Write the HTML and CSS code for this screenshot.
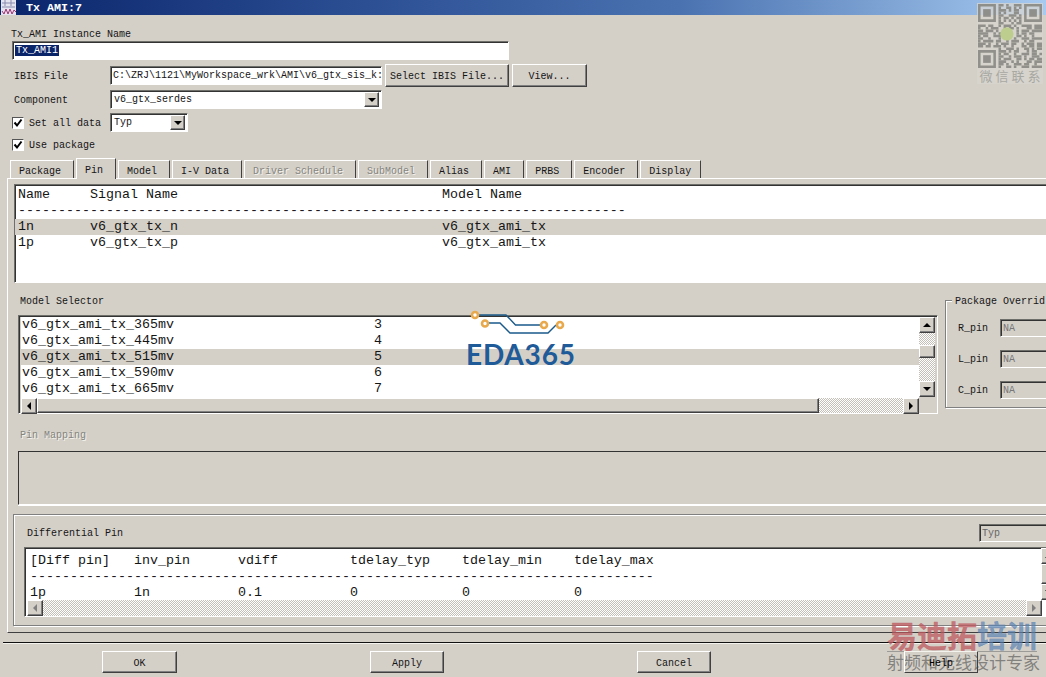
FILE: index.html
```html
<!DOCTYPE html>
<html lang="en">
<head>
<meta charset="utf-8">
<title>Tx AMI:7</title>
<link rel="stylesheet" href="styles.css">
</head>
<body>
<div class="window">
  <header class="titlebar">
    <svg class="appicon" width="17" height="15" viewBox="0 0 17 15"><rect x="1" y="0" width="15" height="15" fill="#e4e4f0"/><path d="M2 3h13M2 7h13M5 0v6M11 0v6" stroke="#8a8ab0" fill="none"/><path d="M2 11l2 3 2-5 2 5 2-5 2 5 2-4 2 2" stroke="#a03070" fill="none"/></svg>
    <span class="titletext">Tx AMI:7</span>
  </header>

  <section class="top">
    <div class="lbl">Tx_AMI Instance Name</div>
    <div class="sunken namefield"><span class="selected">Tx_AMI1</span></div>
    <div class="formrow ibis">
      <span class="rowlabel">IBIS File</span>
      <div class="sunken pathfield">C:\ZRJ\1121\MyWorkspace_wrk\AMI\v6_gtx_sis_k:</div>
      <button class="btn selectbtn">Select IBIS File...</button>
      <button class="btn viewbtn">View...</button>
    </div>
    <div class="formrow comp">
      <span class="rowlabel">Component</span>
      <div class="sunken combo compcombo"><span class="comboval">v6_gtx_serdes</span><span class="raised arrowbtn"><i class="tri down"></i></span></div>
    </div>
    <div class="formrow setall">
      <span class="check"><svg width="10" height="10" viewBox="0 0 10 10"><path d="M1.500 4.500l2.500 3 4.500-6" fill="none" stroke="#000" stroke-width="2"/></svg></span>
      <span class="checklabel setlabel">Set all data</span>
      <div class="sunken combo typcombo"><span class="comboval">Typ</span><span class="raised arrowbtn"><i class="tri down"></i></span></div>
    </div>
    <div class="formrow usepkg">
      <span class="check"><svg width="10" height="10" viewBox="0 0 10 10"><path d="M1.500 4.500l2.500 3 4.500-6" fill="none" stroke="#000" stroke-width="2"/></svg></span>
      <span class="checklabel">Use package</span>
    </div>
  </section>

  <nav class="tabs">
    <span class="tab">Package</span>
    <span class="tab active">Pin</span>
    <span class="tab">Model</span>
    <span class="tab">I-V Data</span>
    <span class="tab disabled">Driver Schedule</span>
    <span class="tab disabled">SubModel</span>
    <span class="tab">Alias</span>
    <span class="tab">AMI</span>
    <span class="tab">PRBS</span>
    <span class="tab">Encoder</span>
    <span class="tab">Display</span>
  </nav>

  <main class="panel">
    <div class="sunken pinlist">
      <div class="row">Name     Signal Name                                 Model Name</div>
      <div class="row">----------------------------------------------------------------------------</div>
      <div class="row hl">1n       v6_gtx_tx_n                                 v6_gtx_ami_tx</div>
      <div class="row">1p       v6_gtx_tx_p                                 v6_gtx_ami_tx</div>
    </div>

    <div class="selector">
      <div class="selcol">
        <div class="lbl sellabel">Model Selector</div>
        <div class="sunken modellist">
          <div class="modelrows">
            <div class="row">v6_gtx_ami_tx_365mv                         3</div>
            <div class="row">v6_gtx_ami_tx_445mv                         4</div>
            <div class="row hl">v6_gtx_ami_tx_515mv                         5</div>
            <div class="row">v6_gtx_ami_tx_590mv                         6</div>
            <div class="row">v6_gtx_ami_tx_665mv                         7</div>
          </div>
          <div class="vscroll">
            <span class="raised sbtn"><i class="tri up"></i></span>
            <span class="track vt1"></span>
            <span class="raised vthumb"></span>
            <span class="track vt2"></span>
            <span class="raised sbtn"><i class="tri down"></i></span>
          </div>
          <div class="hscroll">
            <span class="raised sbtn"><i class="tri left"></i></span>
            <span class="raised hthumb"></span>
            <span class="track ht"></span>
            <span class="raised sbtn"><i class="tri right"></i></span>
          </div>
          <div class="corner"></div>
        </div>
      </div>
      <div class="override">
        <span class="legend">Package Overrid</span>
        <div class="ovrow"><span class="ovlabel">R_pin</span><span class="sunken ovfield">NA</span></div>
        <div class="ovrow"><span class="ovlabel">L_pin</span><span class="sunken ovfield">NA</span></div>
        <div class="ovrow"><span class="ovlabel">C_pin</span><span class="sunken ovfield">NA</span></div>
      </div>
    </div>

    <div class="lbl maplabel">Pin Mapping</div>
    <div class="mapbox"></div>

    <div class="diff">
      <div class="diffhead">
        <span class="difflabel">Differential Pin</span>
        <span class="sunken difftyp">Typ</span>
      </div>
      <div class="sunken difflist">
        <div class="diffrows">
          <div class="row">[Diff pin]   inv_pin      vdiff         tdelay_typ    tdelay_min    tdelay_max</div>
          <div class="row">------------------------------------------------------------------------------</div>
          <div class="row">1p           1n           0.1           0             0             0</div>
        </div>
        <div class="hscroll diffscroll">
          <span class="raised sbtn"><i class="tri left grey"></i></span>
          <span class="track ht"></span>
          <span class="raised sbtn"><i class="tri right grey"></i></span>
        </div>
        <div class="dvscroll">
          <span class="raised sbtn"><i class="tri up"></i></span>
          <span class="raised sbtn dmid"></span>
          <span class="raised sbtn"><i class="tri down"></i></span>
        </div>
      </div>
    </div>
  </main>

  <div class="separator"></div>

  <footer class="actions">
    <button class="btn actbtn okbtn">OK</button>
    <button class="btn actbtn">Apply</button>
    <button class="btn actbtn">Cancel</button>
    <button class="btn actbtn helpbtn">Help</button>
  </footer>

  <aside class="qr">
    <svg class="qrcode" width="64" height="64" viewBox="0 0 25 25">
      <g fill="none" stroke="#85857f">
        <path d="M.5.5h6v6h-6zM18.500.5h6v6h-6zM.5 18.500h6v6h-6z"/>
      </g>
      <g fill="#85857f"><rect x="2" y="2" width="3" height="3"/><rect x="20" y="2" width="3" height="3"/><rect x="2" y="20" width="3" height="3"/></g>
      <g fill="none" stroke="#85857f" stroke-width="1">
        <path d="M8 .5h9" stroke-dasharray="2 1 1 2 3"/>
        <path d="M8 1.500h9" stroke-dasharray="1 2 2 1 1 1 1"/>
        <path d="M8 2.500h9" stroke-dasharray="3 1 1 1 2 1"/>
        <path d="M8 3.500h9" stroke-dasharray="1 1 1 3 2"/>
        <path d="M8 4.500h9" stroke-dasharray="2 2 3 1 1"/>
        <path d="M8 5.500h9" stroke-dasharray="1 1 2 1 1 1 2"/>
        <path d="M8 6.500h9" stroke-dasharray="1 1 1 1 1 1 1 1 1"/>
        <path d="M8 7.500h9" stroke-dasharray="2 3 1 1 2"/>
        <path d="M0 8.500h25" stroke-dasharray="3 1 2 2 1 1 3 1 1 2 4 1 3"/>
        <path d="M0 9.500h25" stroke-dasharray="1 2 1 1 3 2 1 1 2 1 1 3 2 1 3"/>
        <path d="M0 10.500h25" stroke-dasharray="2 1 3 1 1 3 2 2 1 1 3 1 4"/>
        <path d="M0 11.500h25" stroke-dasharray="4 2 1 1 2 5 1 1 2 1 2 3"/>
        <path d="M0 12.500h25" stroke-dasharray="1 1 2 2 3 6 2 1 1 2 1 3"/>
        <path d="M0 13.500h25" stroke-dasharray="2 2 1 3 1 5 1 2 3 1 4"/>
        <path d="M0 14.500h25" stroke-dasharray="1 1 4 1 2 2 1 1 3 2 1 1 2 3"/>
        <path d="M0 15.500h25" stroke-dasharray="3 1 1 2 1 1 3 1 2 2 1 1 3 1 2"/>
        <path d="M0 16.500h25" stroke-dasharray="2 1 2 1 3 1 1 2 1 3 2 1 2 1 2"/>
        <path d="M8 17.500h17" stroke-dasharray="1 2 3 1 1 2 2 1 1 1 2"/>
        <path d="M8 18.500h17" stroke-dasharray="3 1 1 1 2 3 1 1 2 2"/>
        <path d="M8 19.500h17" stroke-dasharray="1 1 2 2 1 2 3 1 2 1 1"/>
        <path d="M8 20.500h17" stroke-dasharray="2 2 1 1 3 1 1 2 3 1"/>
        <path d="M8 21.500h17" stroke-dasharray="1 1 3 2 2 1 1 1 2 1 2"/>
        <path d="M8 22.500h17" stroke-dasharray="3 2 1 1 1 3 2 1 3"/>
        <path d="M8 23.500h17" stroke-dasharray="2 1 1 2 3 1 2 2 1 2"/>
        <path d="M8 24.500h17" stroke-dasharray="1 2 2 1 1 2 3 1 4"/>
      </g>
      <circle cx="11.300" cy="11.700" r="2.600" fill="#b9cc84"/>
    </svg>
    <span class="qrcap">微信联系</span>
  </aside>

  <aside class="edalogo">
    <svg width="112" height="26" viewBox="0 0 112 26">
      <g fill="none" stroke="#1a5a8a" stroke-width="1.400">
        <path d="M9 5h31l9.500 10h29"/>
        <path d="M19 13h15l10 10h38l8-8"/>
      </g>
      <g fill="#fff" stroke="#e8a94c" stroke-width="2.600">
        <circle cx="9" cy="5" r="3"/><circle cx="19" cy="13.500" r="3"/><circle cx="78" cy="15" r="3"/><circle cx="94" cy="15" r="3"/>
      </g>
    </svg>
    <span class="edatext">EDA365</span>
  </aside>

  <aside class="brand">
    <div class="brandtop"><span class="bred">易迪拓</span><span class="bblue">培训</span></div>
    <div class="brandsub">射频和无线设计专家</div>
  </aside>
</div>
</body>
</html>
```
FILE: styles.css
```css
* { box-sizing: border-box; }
html, body { margin: 0; padding: 0; }
body {
  background: #d4d0c8;
  color: #151515;
  font: 10px/12px "Liberation Mono", "Courier New", monospace;
}
.window { position: relative; width: 1046px; height: 677px; overflow: hidden; background: #d4d0c8; }

.titlebar {
  display: flex; align-items: center; height: 15px; padding-left: 0;
  background: linear-gradient(90deg, #0a246a 0%, #2c4f94 35%, #4a72b0 65%, #a6caf0 100%);
}
.appicon { flex: none; }
.titletext { margin-left: 9px; color: #fff; font-weight: bold; font-size: 11.667px; }

.sunken {
  border: 1px solid; border-color: #6e6e6a #fff #fff #6e6e6a;
  box-shadow: inset 1px 1px 0 #333;
  background: #fff;
}
.raised {
  display: flex; align-items: center; justify-content: center;
  background: #d4d0c8;
  border: 1px solid; border-color: #fff #404040 #404040 #fff;
  box-shadow: inset -1px -1px 0 #808080;
}
.btn {
  font: 10px/12px "Liberation Mono", "Courier New", monospace; color: #151515;
  background: #d4d0c8; padding: 2px 0 0;
  border: 1px solid; border-color: #fff #404040 #404040 #fff;
  box-shadow: inset -1px -1px 0 #808080;
}

.lbl { height: 12px; padding-top: 1px; }
.top { padding: 13px 0 0 11px; }
.namefield { width: 497px; height: 19px; margin: 1px 0 0 1px; padding: 3px 0 0 2px; }
.selected { background: #0a246a; color: #fff; padding: 0 1px; }
.formrow { display: flex; align-items: center; }
.rowlabel { width: 96px; padding: 2px 0 0 3px; }
.ibis { height: 23px; margin-top: 4px; }
.pathfield { width: 272px; height: 19px; margin-left: 3px; padding: 3px 0 0 2px; white-space: pre; overflow: hidden; }
.selectbtn { width: 124px; height: 23px; margin-left: 3px; }
.viewbtn { width: 75px; height: 23px; margin-left: 3px; }
.comp { height: 19px; margin-top: 3px; }
.combo { display: flex; align-items: center; justify-content: space-between; height: 19px; padding: 2px 2px 2px 3px; }
.comboval { padding-top: 1px; }
.compcombo { width: 272px; margin-left: 3px; }
.setall { height: 19px; margin-top: 4px; }
.typcombo { width: 78px; margin-left: 6px; }
.arrowbtn { width: 15px; height: 15px; }
.check {
  display: flex; align-items: center; justify-content: center;
  flex: none; width: 12px; height: 12px; margin-left: 1px; background: #fff;
  border: 1px solid; border-color: #555 #fff #fff #555;
}
.checklabel { margin-left: 5px; padding-top: 2px; }
.setlabel { width: 75px; }
.usepkg { height: 13px; margin-top: 6px; }

.tri { display: block; width: 0; height: 0; border: 4px solid transparent; }
.tri.down { border-top-color: #000; border-bottom-width: 0; }
.tri.up { border-bottom-color: #000; border-top-width: 0; }
.tri.left { border-right-color: #000; border-left-width: 0; }
.tri.right { border-left-color: #000; border-right-width: 0; }
.tri.left.grey { border-right-color: #808080; }
.tri.right.grey { border-left-color: #808080; }

.tabs { display: flex; align-items: flex-end; height: 20px; margin-top: 7px; padding-left: 10px; position: relative; z-index: 1; }
.tab {
  height: 18px; padding: 5px 12px 0 8px; margin-right: 2px;
  border-top: 1px solid #fff; border-left: 1px solid #fff; border-right: 1px solid #404040;
}
.tab:last-child { padding-right: 9px; }
.tab.active { height: 21px; margin-bottom: -1px; background: #d4d0c8; padding-top: 6px; }
.tab.disabled, .maplabel { color: #85857f; text-shadow: 1px 1px 0 #f4f2ec; }

.panel {
  width: 1100px; height: 455px; margin-left: 7px;
  border: 1px solid; border-color: #fff #404040 #404040 #fff;
}
.row { height: 16px; font-size: 13.333px; line-height: 16px; white-space: pre; padding-left: 3px; }
.row.hl { background: #d4d0c8; }

.pinlist { height: 99px; margin: 5px 0 0 6px; padding-top: 2px; }

.selector { display: flex; align-items: flex-start; margin: 12px 0 0 10px; }
.selcol { width: 920px; flex: none; }
.sellabel { padding-left: 2px; }
.modellist {
  display: grid; grid-template-columns: 1fr 16px; grid-template-rows: 80px 16px;
  height: 99px; margin-top: 8px; padding: 1px 2px 1px 2px;
  background: #d4d0c8;
}
.modelrows { background: #fff; }
.modelrows .row { padding-left: 1px; }
.vscroll { display: flex; flex-direction: column; }
.sbtn { flex: none; width: 16px; height: 16px; }
.track { display: block; background: repeating-conic-gradient(#fff 0 25%, #c4c0b8 0 50%) 0 0 / 2px 2px; }
.vt1 { height: 12px; }
.vthumb { height: 13px; flex: none; }
.vt2 { height: 23px; }
.hscroll { display: flex; border-top: 1px solid #fff; }
.hthumb { width: 782px; flex: none; }
.ht { flex: 1; }
.corner { background: #d4d0c8; }

.override {
  position: relative; width: 120px; height: 108px; margin: 5px 0 0 7px; padding-top: 18px;
  border: 1px solid #808080; box-shadow: 1px 1px 0 #fff, inset 1px 1px 0 #fff;
}
.legend { position: absolute; top: -5px; left: 6px; padding: 0 3px; background: #d4d0c8; }
.ovrow { display: flex; align-items: center; height: 18px; margin-bottom: 13px; padding-left: 12px; }
.ovlabel { width: 42px; padding-top: 1px; }
.ovfield { width: 60px; height: 18px; padding: 3px 0 0 2px; background: #d4d0c8; color: #777; }

.maplabel { margin: 15px 0 0 12px; }
.mapbox {
  height: 54px; margin: 10px 0 0 10px;
  border: 1px solid; border-color: #333 #fff #fff #333; box-shadow: 0 1px 0 #fff;
}

.diff {
  height: 112px; margin: 9px 0 0 5px;
  border: 1px solid #808080; box-shadow: inset 1px 1px 0 #fff, 1px 1px 0 #fff;
}
.diffhead { display: flex; align-items: center; justify-content: space-between; height: 18px; margin-top: 9px; padding: 0 56px 0 13px; }
.difflabel { padding-top: 2px; }
.difftyp { width: 70px; height: 18px; padding: 3px 0 0 2px; background: #d4d0c8; color: #666; }
.difflist {
  position: relative;
  height: 70px; margin: 5px 0 0 10px; padding: 4px 0 0 2px; width: 1033px;
}
.diffrows .row { padding-left: 3px; line-height: 18px; }
.diffscroll { width: 1015px; border: 0; margin-top: 0; }
.dvscroll { position: absolute; top: 0; left: 1016px; display: flex; flex-direction: column; }
.dmid { height: 20px; }

.separator { height: 1px; margin: 9px 0 0 3px; background: #111; box-shadow: 0 1px 0 #f4f2ec; }

.actions { display: flex; gap: 193px; margin-top: 8px; padding-left: 102px; }
.actbtn { width: 74px; height: 22px; padding-top: 3px; }
.okbtn { width: 75px; }
.helpbtn { color: #000; position: relative; z-index: 3; background: transparent; box-shadow: none; border-top-color: #f4f2ec; }

.qr {
  position: absolute; left: 977px; top: 3px; width: 66px; height: 81px;
  display: flex; flex-direction: column; align-items: center; padding-top: 1px;
  background: rgba(216, 214, 208, .75);
}
.qrcode { opacity: .85; filter: blur(.4px); }
.qrcap {
  font: 13px/15px "Noto Sans CJK SC", sans-serif; color: #a8a8a2;
  letter-spacing: 3px; margin-left: 3px; white-space: nowrap;
}

.edalogo { position: absolute; left: 466px; top: 310px; width: 114px; }
.edalogo svg { display: block; }
.edatext {
  display: block; margin-top: 3px;
  font: bold 28px/30px Lato, "Noto Sans", sans-serif; color: #1f5a99; letter-spacing: .8px;
}

.brand { position: absolute; left: 887px; top: 618px; width: 159px; z-index: 2; pointer-events: none; }
.brandtop { font: bold 30px/33px "Noto Sans CJK SC", sans-serif; height: 33px; white-space: nowrap; -webkit-text-stroke: .4px; }
.bred { color: rgba(190, 90, 95, .75); }
.bblue { color: rgba(90, 130, 180, .7); }
.brandsub {
  border-top: 1px solid rgba(120, 120, 120, .6); width: 150px;
  font: 17px/19px "Noto Sans CJK SC", sans-serif; color: rgba(115, 115, 112, .85); white-space: nowrap;
}
```
